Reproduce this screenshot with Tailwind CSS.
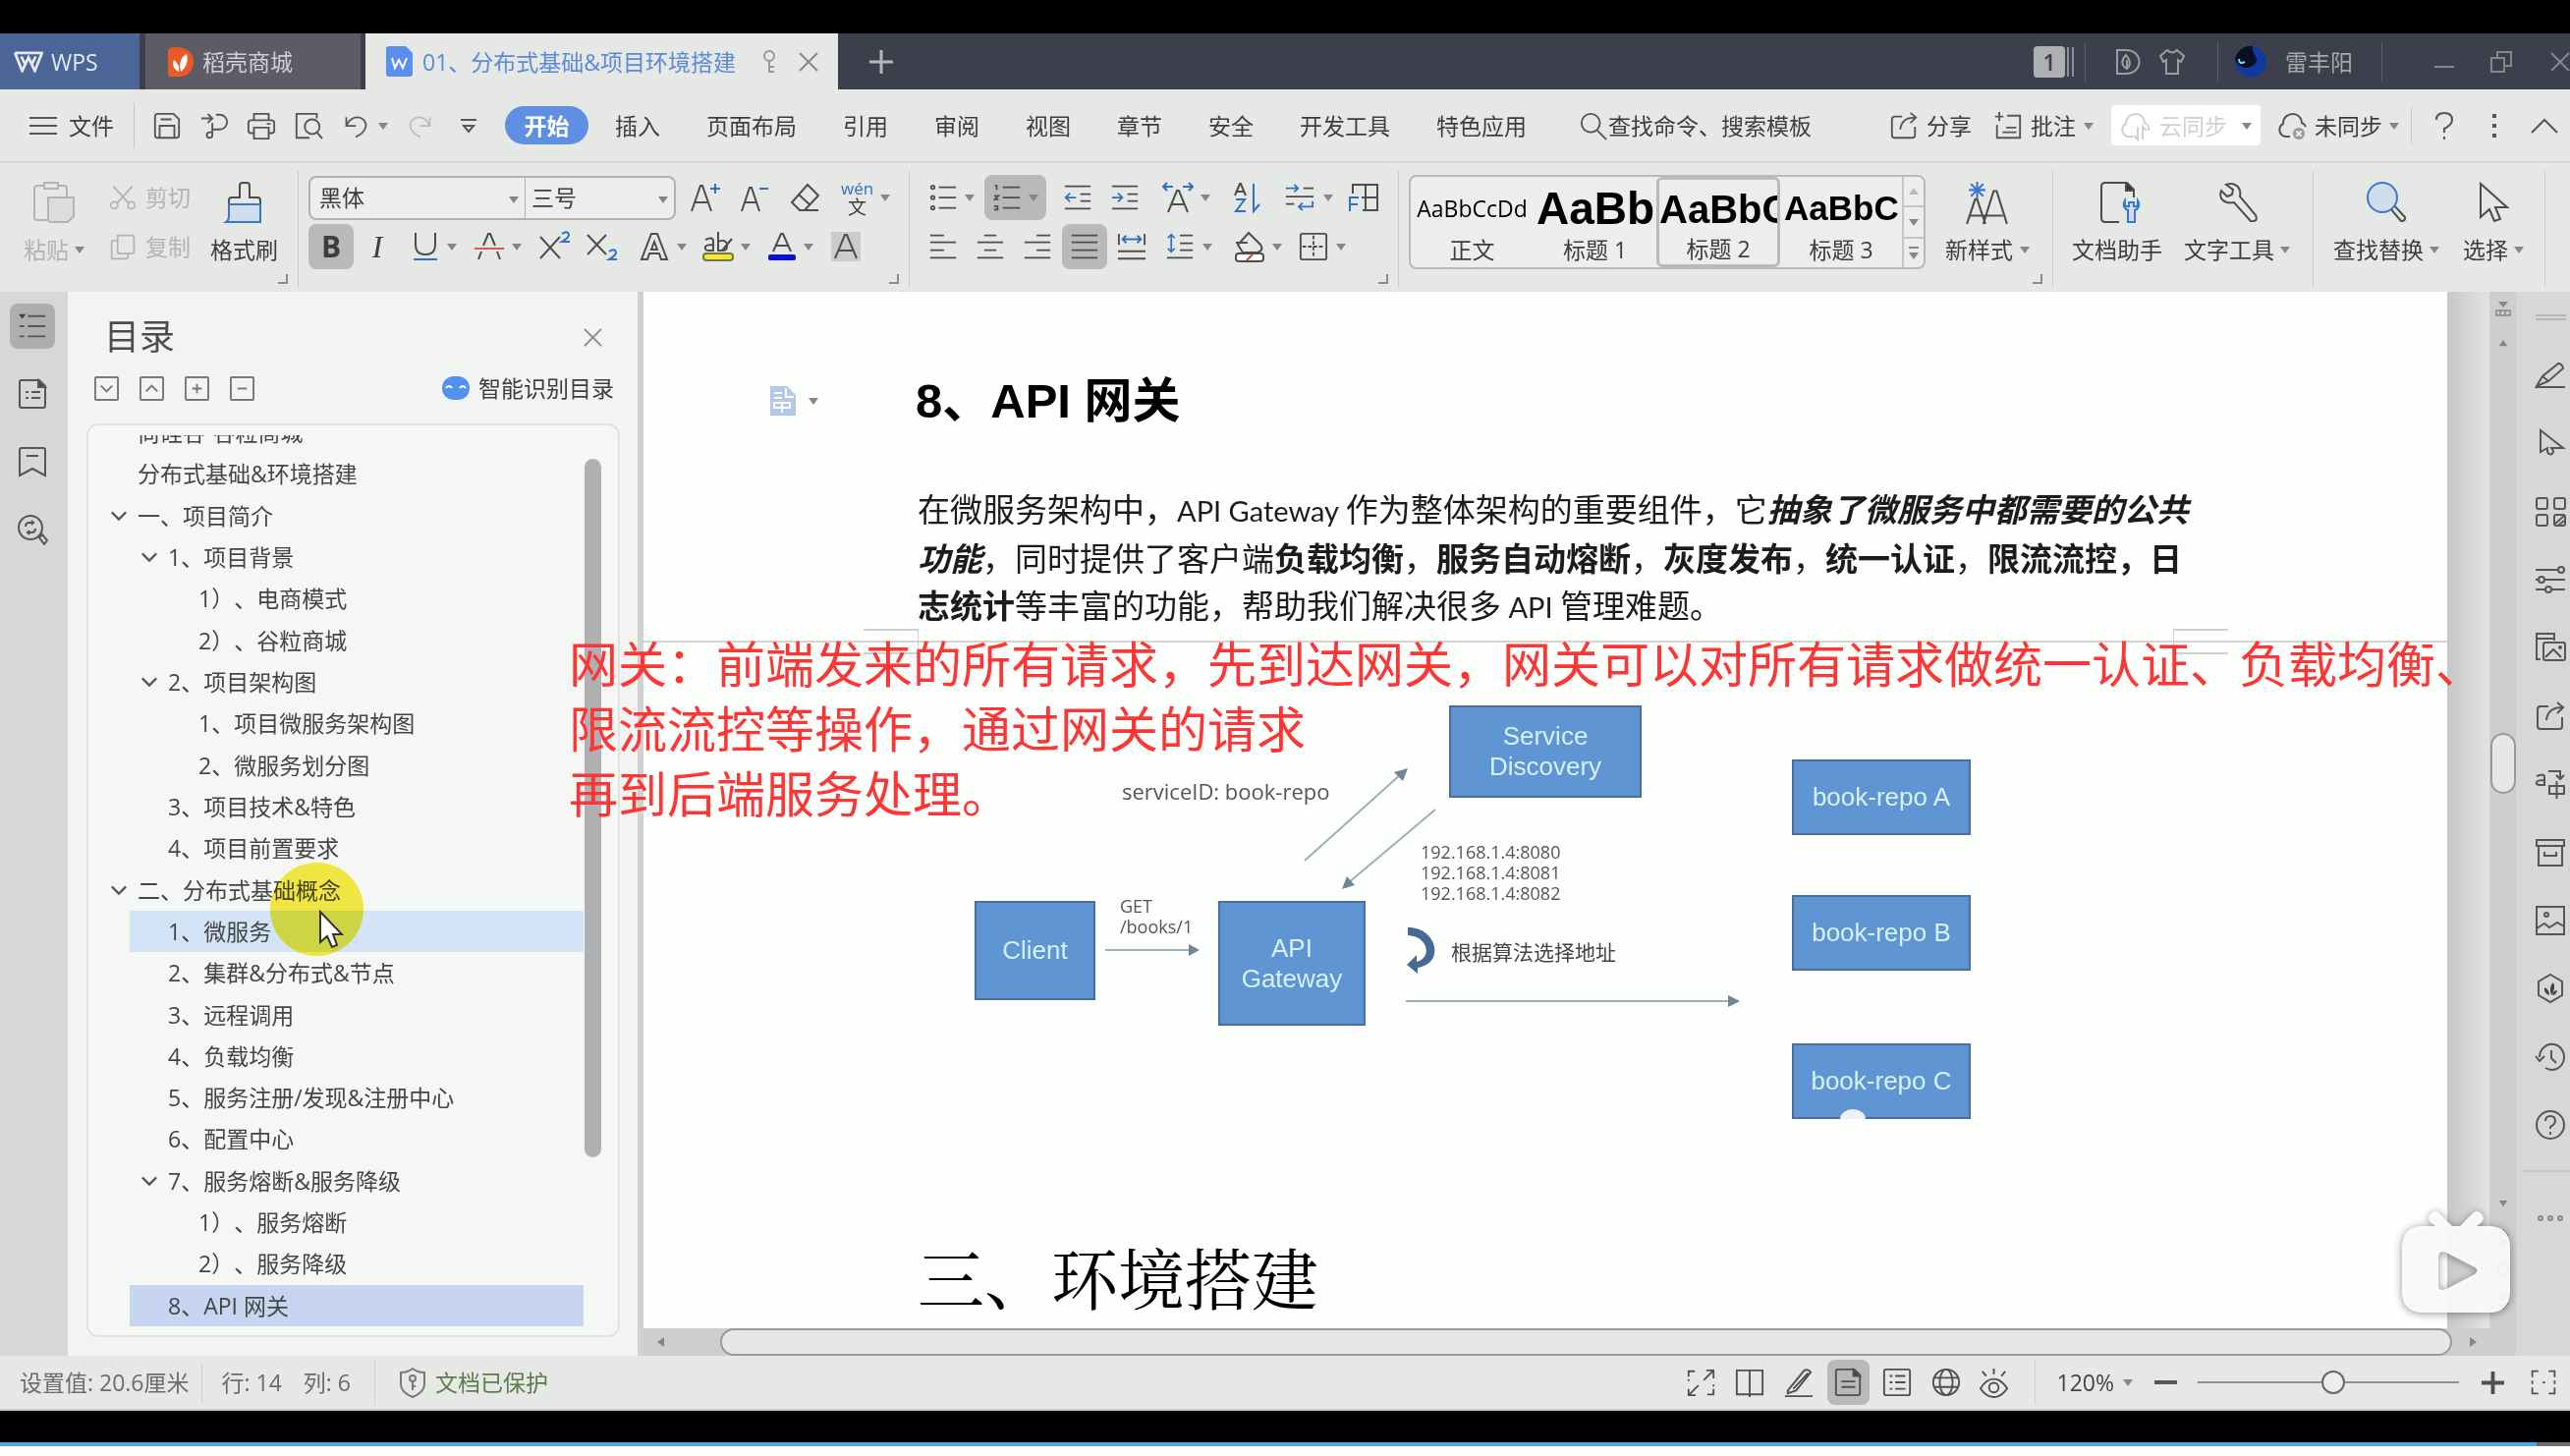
<!DOCTYPE html>
<html lang="zh-CN">
<head>
  <meta charset="UTF-8">
  <meta name="viewport" content="width=device-width, initial-scale=1.0">
  <title>01、分布式基础&amp;项目环境搭建</title>
  <script src="https://cdn.jsdelivr.net/npm/@tailwindcss/browser@4"></script>
</head>
<body class="relative h-screen flex flex-col overflow-hidden bg-black text-[23px] leading-[32px] text-[#3c3e3c] whitespace-nowrap [text-spacing-trim:space-all] font-['Open_Sans','Noto_Sans_CJK_SC',sans-serif]">

  <!-- 图标 -->
  <svg class="hidden">
    <symbol id="caret" viewBox="0 0 10 8"><path d="M0 1h10L5 8z" fill="#858785" stroke="none"/></symbol>
    <symbol id="launch" viewBox="0 0 10 10"><path d="M9 0v9H0" stroke="#8a8c8a"/></symbol>
    <symbol id="save" viewBox="0 0 32 32"><path d="M3 6q0-3 3-3h17l6 6v17q0 3-3 3H6q-3 0-3-3zM8 29V16h16v13M9 9h12"/></symbol>
    <symbol id="pdf" viewBox="0 0 32 32"><path d="M2 8h11M9 3l5 5-5 5M18 4h4a8 8 0 0 1 0 16h-8v6a3 3 0 1 1-3-3h3V13"/></symbol>
    <symbol id="print" viewBox="0 0 32 32"><path d="M8 10V3h16v7M8 24H5q-3 0-3-3v-8q0-3 3-3h22q3 0 3 3v8q0 3-3 3h-3M8 18h16v12H8zM22 14h4"/></symbol>
    <symbol id="preview" viewBox="0 0 32 32"><path d="M25 8V3H3v26h14"/><circle cx="20" cy="17" r="8"/><path d="m25 23 6 7"/></symbol>
    <symbol id="undo" viewBox="0 0 32 32"><path d="M4 6v10h11M4 16C9 5 19 4 24 9s4 14-9 20"/></symbol>
    <symbol id="redo" viewBox="0 0 32 32"><path d="M28 6v10H17M28 16C23 5 13 4 8 9s-4 14 9 20"/></symbol>
    <symbol id="search" viewBox="0 0 32 32"><circle cx="13" cy="13" r="10"/><path d="m20 21 10 10"/></symbol>
    <symbol id="share" viewBox="0 0 32 32"><path d="M14 6H6q-3 0-3 3v17q0 3 3 3h19q3 0 3-3v-9M12 20c1-9 6-13 16-13M23 2l6 5-6 6"/></symbol>
    <symbol id="comment" viewBox="0 0 32 32"><path d="M2 6h9M6.500 1v10M15 5h14v24H4V15M14 18h11M10 23h15"/></symbol>
    <symbol id="cloud" viewBox="0 0 32 32"><path d="M14 27H9a7 7 0 0 1-2-13C7 7 12 4 17 4s9 4 9 9a7 7 0 0 1 4 8M19 17v13l-4-4M24 30V17l4 4"/></symbol>
    <symbol id="cloudx" viewBox="0 0 32 32"><path d="M14 27H9a7 7 0 0 1-2-13C7 7 12 4 17 4s9 4 9 9q3 1 4 4"/><circle cx="23" cy="24" r="6" fill="#999b99" stroke="none"/><path d="m20.500 21.500 5 5m0-5-5 5" stroke="#eee"/></symbol>
    <symbol id="paste" viewBox="0 0 44 44"><path d="M12 5H5q-3 0-3 3v29q0 3 3 3h10M26 5h6q3 0 3 3v8M12 2h14v6H12z"/><path d="M16 17h26v19l-6 6H19q-3 0-3-3z" fill="#dcdedb"/></symbol>
    <symbol id="cut" viewBox="0 0 32 32"><path d="m5 3 18 20M27 3 9 23"/><circle cx="6" cy="25" r="4"/><circle cx="26" cy="25" r="4"/></symbol>
    <symbol id="copy" viewBox="0 0 32 32"><path d="M10 3h17q2 0 2 2v17q0 2-2 2H12q-2 0-2-2zM10 9H5q-2 0-2 2v17q0 2 2 2h15q2 0 2-2v-4"/></symbol>
    <symbol id="brush" viewBox="0 0 44 44"><path d="M6 24v-4q0-3 3-3h8V5q0-3 3-3h4q3 0 3 3v12h8q3 0 3 3v4"/><path d="M6 24h32v18H3q3-2 3-6z" fill="#cfdded" stroke="#3878c4"/></symbol>
    <symbol id="eraser" viewBox="0 0 32 32"><path d="M18 3 29 14 15 29H10L2 21zM9 13l12 11M13 29h16"/></symbol>
    <symbol id="bullets" viewBox="0 0 32 32"><path d="M11 4h20M11 16h20M11 28h20"/><circle cx="4" cy="4" r="2"/><circle cx="4" cy="16" r="2"/><circle cx="4" cy="28" r="2"/></symbol>
    <symbol id="numbers" viewBox="0 0 32 32"><path d="M11 4h20M11 16h20M11 28h20M2 2h2v5M1 14h5l-4 4h4M1 26h4v4H1"/></symbol>
    <symbol id="outdent" viewBox="0 0 32 32"><path d="M1 3h30M19 12h12M19 20h12M1 29h30"/><path d="M14 16H2m5-5-5 5 5 5" stroke="#3070c0"/></symbol>
    <symbol id="indent" viewBox="0 0 32 32"><path d="M1 3h30M19 12h12M19 20h12M1 29h30"/><path d="M1 16h12m-5-5 5 5-5 5" stroke="#3070c0"/></symbol>
    <symbol id="scale" viewBox="0 0 32 32"><path d="m6 31 9-22h2l9 22M9 23h14"/><path d="M1 5h10M5 1 1 5l4 4M21 5h10m-4-4 4 4-4 4" stroke="#3070c0"/></symbol>
    <symbol id="sort" viewBox="0 0 32 32"><path d="m3 14 5-12h1l5 12M5 10h8"/><path d="M4 18h9L4 30h10M22 2v28l6-7" stroke="#3070c0"/></symbol>
    <symbol id="marks" viewBox="0 0 32 32"><path d="M20 6h11M1 15h30M1 23h9"/><path d="M1 6h13m-4-4 4 4-4 4M30 20v6H15m4-4-4 4 4 4" stroke="#3070c0"/></symbol>
    <symbol id="tabs" viewBox="0 0 32 32"><path d="M5 12V3h25v26H15M18 3v26M14 16h16"/><path d="M2 30V16h9M2 23h8" stroke="#3070c0"/></symbol>
    <symbol id="left" viewBox="0 0 32 32"><path d="M1 3h16M1 11h30M1 20h16M1 29h30"/></symbol>
    <symbol id="center" viewBox="0 0 32 32"><path d="M9 3h14M1 11h30M9 20h14M1 29h30"/></symbol>
    <symbol id="right" viewBox="0 0 32 32"><path d="M15 3h16M1 11h30M15 20h16M1 29h30"/></symbol>
    <symbol id="justify" viewBox="0 0 32 32"><path d="M1 3h30M1 11h30M1 20h30M1 29h30"/></symbol>
    <symbol id="spread" viewBox="0 0 32 32"><path d="M2 2v12M30 2v12M1 21h30M1 29h30"/><path d="M6 8h20M10 4 6 8l4 4M22 4l4 4-4 4" stroke="#3070c0"/></symbol>
    <symbol id="spacing" viewBox="0 0 32 32"><path d="M16 3h15M16 12h15M16 20h15M1 29h30"/><path d="M6 2v20M2 6l4-4 4 4M2 18l4 4 4-4" stroke="#3070c0"/></symbol>
    <symbol id="bucket" viewBox="0 0 32 32"><path d="M15 2 27 14c4 6-2 8-4 8H9L4 14zM2 12h12"/><rect x="2" y="23" width="28" height="8" rx="3" fill="#fff"/><path d="m13 30 6-6" stroke="#d0453a"/></symbol>
    <symbol id="border" viewBox="0 0 32 32"><rect x="2" y="2" width="28" height="28" rx="2"/><path d="M16 4v24M4 16h24" stroke-dasharray="4 2"/></symbol>
    <symbol id="style" viewBox="0 0 44 44"><path d="m2 42 8-24h2l8 24M5 34h32M18 42 28 10h3l10 32"/><path d="M12 1v16M4 9h16M6 3l12 12M18 3 6 15" stroke="#3878d0"/></symbol>
    <symbol id="helper" viewBox="0 0 44 44"><path d="M22 42H8q-4 0-4-4V6q0-4 4-4h22l7 7v8"/><path d="M29 2v8h8" fill="#333"/><path d="M28 20c-3 5 0 9 3 10v12h7V30c3-1 6-5 3-10v6h-4v-4h-5v4h-4z" fill="#cfdded" stroke="#3878d0"/></symbol>
    <symbol id="wrench" viewBox="0 0 44 44"><path d="M10 4c8-3 16 2 14 12l16 19q3 7-5 6L18 22C8 24 2 18 5 10l6 6 5-2 1-5z"/></symbol>
    <symbol id="find" viewBox="0 0 44 44"><path d="m26 28 4-3 11 12q1 4-4 4z"/><circle cx="18" cy="17" r="15" fill="#cfdded" stroke="#3878d0"/></symbol>
    <symbol id="pointer" viewBox="0 0 44 44"><path d="M9 3v34l9-8 5 12 6-2-5-12h12z"/></symbol>
    <symbol id="outline" viewBox="0 0 32 32"><path d="M11 5h19M11 16h19M11 27h19M2 16h5M2 27h5"/><path d="M1 3h8l-4 5z" fill="#444" stroke="none"/></symbol>
    <symbol id="page" viewBox="0 0 32 32"><path d="M3 4q0-2 2-2h18l6 6v20q0 2-2 2H5q-2 0-2-2zM9 14h3M15 14h9M9 20h3M15 20h9"/><path d="M22 2v7h7z" fill="#444"/></symbol>
    <symbol id="doc" viewBox="0 0 32 32"><path d="M3 4q0-2 2-2h18l6 6v20q0 2-2 2H5q-2 0-2-2zM9 15h15M9 21h15"/><path d="M22 2v7h7z" fill="#444"/></symbol>
    <symbol id="bookmark" viewBox="0 0 32 32"><path d="M3 30V4q0-2 2-2h22q2 0 2 2v26l-13-7zM10 10h12"/></symbol>
    <symbol id="lookup" viewBox="0 0 32 32"><circle cx="14" cy="14" r="12"/><path d="m23 24 3-3 5 6-3 4zM9 13q0-4 4-4h4M19 15q0 4-4 4h-4M15 7l2 2-2 2M13 17l-2 2 2 2"/></symbol>
    <symbol id="pen" viewBox="0 0 32 32"><path d="M2 27 8 17 24 4q4 0 5 5L14 22zM8 17l6 5M1 28h30"/></symbol>
    <symbol id="arrow" viewBox="0 0 32 32"><path d="M6 3v22l7-4c-1 8 6 8 6 3l-2-3h12z"/></symbol>
    <symbol id="apps" viewBox="0 0 32 32"><rect x="2" y="2" width="11" height="11" rx="2"/><rect x="20" y="2" width="11" height="11" rx="2"/><rect x="2" y="19" width="11" height="11" rx="2"/><rect x="20" y="19" width="11" height="11" rx="2"/><path d="m21 28 9-8M24 30l6-5"/></symbol>
    <symbol id="sliders" viewBox="0 0 32 32"><path d="M1 6h22M1 16h3M11 16h20M1 26h10M18 26h13"/><circle cx="27" cy="6" r="3"/><circle cx="7" cy="16" r="3"/><circle cx="14" cy="26" r="3"/></symbol>
    <symbol id="images" viewBox="0 0 32 32"><path d="M6 28H2V2h18v7M2 7h18"/><rect x="9" y="11" width="22" height="18" rx="2"/><path d="m11 26 8-8 8 8"/><circle cx="26" cy="16" r="1"/></symbol>
    <symbol id="translate" viewBox="0 0 32 32"><path d="M14 3h12v8M22 7l4 4 4-4M15 18h15v8H15zM22.500 13v18M2 8q8-3 8 1v8H5q-4 0-3-3 1-2 8-2"/></symbol>
    <symbol id="archive" viewBox="0 0 32 32"><path d="M2 3h28v6H2zM4 9v20h24V9M10 15v4h12v-4"/></symbol>
    <symbol id="image" viewBox="0 0 32 32"><rect x="2" y="2" width="28" height="28"/><path d="m2 24 8-5 5 4 8-5 7 4"/><circle cx="12" cy="10" r="2"/></symbol>
    <symbol id="hex" viewBox="0 0 32 32"><path d="m16 2 12 7v14l-12 7-12-7V9z"/><path d="M15 23q-6-2-5-8 5 2 5 8zM17 23q-3-9 2-13 3 6-2 13zM18 23q1-5 5-5-1 5-5 5z" fill="#444" stroke="none"/></symbol>
    <symbol id="history" viewBox="0 0 32 32"><path d="M5 16A12.500 13 0 1 1 11 27M1 15l4 5 5-5M17 9v8l5 5"/></symbol>
    <symbol id="help" viewBox="0 0 32 32"><circle cx="16" cy="16" r="14"/><path d="M11 12q0-5 5-5t5 5q0 3-5 6v2M16 23v3"/></symbol>
    <symbol id="full" viewBox="0 0 32 32"><path d="M2 9V3h7M23 29h7v-6M2 23v7h8M2 30l11-11M30 11V2h-8M30 2 19 13M2 14v-2M30 18v2"/></symbol>
    <symbol id="book" viewBox="0 0 32 32"><path d="M2 3h14v26H2zM16 3h14v26H16zM16 29v3"/></symbol>
    <symbol id="edit" viewBox="0 0 32 32"><path d="M4 25 22 3q4-2 7 2L13 25l-9 3zM10 23 26 6M1 31h30"/></symbol>
    <symbol id="list" viewBox="0 0 32 32"><rect x="2" y="2" width="28" height="28" rx="2"/><path d="M8 9h3M14 9h11M8 16h3M14 16h11M14 23h11M8 23h3"/></symbol>
    <symbol id="globe" viewBox="0 0 32 32"><circle cx="16" cy="16" r="14"/><ellipse cx="16" cy="16" rx="7" ry="14"/><path d="M3 11h26M3 21h26"/></symbol>
    <symbol id="eye" viewBox="0 0 32 32"><path d="M2 22Q8 12 16 12t14 10q-6 9-14 9T2 22zM16 1v6M4 4l4 5M28 4l-4 5"/><circle cx="16" cy="21" r="5"/></symbol>
    <symbol id="fit" viewBox="0 0 32 32"><path d="M3 10V3h7M22 3h7v7M3 22v7h7M22 29h7v-7M3 14v4M29 14v4M15 16h3"/></symbol>
    <symbol id="x" viewBox="0 0 20 20"><path d="m1 1 18 18M19 1 1 19"/></symbol>
    <symbol id="down" viewBox="0 0 20 12"><path d="m2 2 8 8 8-8"/></symbol>
  </svg>

  <div class="h-[34px] shrink-0"></div>

  <!-- 标签栏 -->
  <header class="h-[57px] shrink-0 flex items-center bg-[#3d404c] text-[#d0d1d6]">
    <button class="w-[142px] h-full bg-[#4a6596] flex items-center pl-[14px] gap-[8px] text-[#e3eaf5]">
      <svg class="w-[30px] h-[22px] fill-none stroke-current stroke-[3]" viewBox="0 0 32 24"><path d="M1 2h30l-8 20-7-15-7 15L1 2M8 6l4 8M20 14l4-8"/></svg>WPS
    </button>
    <button class="ml-[6px] w-[219px] h-full bg-[#5b5c66] flex items-center pl-[23px] gap-[9px]">
      <svg class="w-[26px] h-[30px]" viewBox="0 0 26 30"><path d="M0 5q0-5 7-5c12 0 19 6 19 15S19 30 12 30H3q-3 0-3-3z" fill="#ea5a28"/><path d="M11 25c-6-3-7-8-5-12 4 3 6 7 5 12zM13 25c-2-9 0-15 6-18 2 8-1 14-6 18z" fill="#fff"/></svg>稻壳商城
    </button>
    <div class="ml-[5px] w-[481px] h-full bg-[#e6e8e5] flex items-center pl-[21px] text-[#5a8ad8]">
      <svg class="w-[27px] h-[31px] mr-[10px]" viewBox="0 0 27 31"><path d="M0 3q0-3 3-3h17l7 7v21q0 3-3 3H3q-3 0-3-3z" fill="#5b8fec"/><path d="m6 12 3 10 4-8 4 8 4-10" fill="none" stroke="#fff" stroke-width="2"/></svg>
      <span>01、分布式基础&amp;项目环境搭建</span>
      <svg class="ml-[26px] w-[16px] h-[24px] fill-none stroke-[#999] stroke-2" viewBox="0 0 16 24"><circle cx="8" cy="6" r="5"/><path d="M8 11v12M8 17h5M8 22h5"/></svg>
      <button aria-label="关闭标签" class="ml-[22px]"><svg class="size-[20px] stroke-[#888] stroke-2"><use href="#x"/></svg></button>
    </div>
    <button aria-label="新建" class="ml-[32px]"><svg class="size-[24px] stroke-[#b5b6bb] stroke-[3]" viewBox="0 0 24 24"><path d="M12 0v24M0 12h24"/></svg></button>
    <div class="ml-auto flex items-center h-full stroke-[#9a9ca3] fill-none">
      <span class="w-[32px] h-[32px] rounded bg-[#aeafb3] text-[#3d404c] font-semibold text-center">1</span>
      <span class="ml-[2px] w-[7px] h-[30px] border-x-2 border-[#8d8f96]"></span>
      <span class="ml-[11px] w-px h-[40px] bg-[#5b5d68]"></span>
      <svg class="ml-[30px] w-[26px] h-[28px] stroke-2" viewBox="0 0 26 28"><path d="M2 2h9c18 0 18 24 0 24H2zM12 21c-6-3-6-9-1-14 2 3 7 8 1 14zm0 0V12"/></svg>
      <svg class="ml-[19px] w-[26px] h-[28px] stroke-2" viewBox="0 0 26 28"><path d="M8 2 1 8l3 6 3-2v14h12V12l3 2 3-6-7-6q-5 5-10 0z"/></svg>
      <span class="ml-[33px] w-px h-[40px] bg-[#5b5d68]"></span>
      <svg class="ml-[17px] size-[32px]" viewBox="0 0 32 32"><circle cx="16" cy="16" r="16" fill="#123a9c" stroke="none"/><path d="M0 14A16 16 0 0 1 18 0c-2 8 8 12 2 18S6 24 0 14z" fill="#061020" stroke="none"/><path d="M4 13q0 6 6 3" stroke="#7fe0e8" stroke-width="2"/></svg>
      <span class="ml-[19px] text-[#a5a7ae]">雷丰阳</span>
      <span class="ml-[29px] w-px h-[40px] bg-[#5b5d68]"></span>
      <button aria-label="最小化" class="ml-[53px] mt-[10px] w-[20px] h-[2px] bg-[#85878e]"></button>
      <button aria-label="还原" class="ml-[37px]"><svg class="size-[22px] stroke-[#85878e] stroke-2" viewBox="0 0 22 22"><path d="M1 7h13v14H1zM7 7V1h14v14h-7"/></svg></button>
      <button aria-label="关闭" class="ml-[39px]"><svg class="size-[20px] stroke-[#85878e] stroke-2"><use href="#x"/></svg></button>
    </div>
  </header>

  <!-- 菜单栏 -->
  <nav class="h-[75px] shrink-0 flex items-center bg-[#e6e8e5] border-b-2 border-[#d6d8d5] fill-none stroke-[#555755] stroke-2">
    <button class="ml-[30px] flex items-center gap-[12px]">
      <svg class="w-[28px] h-[20px]" viewBox="0 0 28 20"><path d="M0 2h28M0 10h28M0 18h28"/></svg>文件
    </button>
    <span class="ml-[20px] w-px h-[46px] bg-[#c4c6c3]"></span>
    <button aria-label="保存" class="ml-[18px]"><svg class="size-[30px]"><use href="#save"/></svg></button>
    <button aria-label="输出为PDF" class="ml-[18px]"><svg class="size-[30px]"><use href="#pdf"/></svg></button>
    <button aria-label="打印" class="ml-[18px]"><svg class="size-[30px]"><use href="#print"/></svg></button>
    <button aria-label="打印预览" class="ml-[18px]"><svg class="size-[30px]"><use href="#preview"/></svg></button>
    <button aria-label="撤销" class="ml-[20px] flex items-center gap-[8px]"><svg class="size-[28px]"><use href="#undo"/></svg><svg class="w-[10px] h-[8px]"><use href="#caret"/></svg></button>
    <button aria-label="恢复" class="ml-[18px] stroke-[#bbbdba]"><svg class="size-[28px]"><use href="#redo"/></svg></button>
    <button aria-label="更多" class="ml-[28px]"><svg class="w-[16px] h-[16px]" viewBox="0 0 16 16"><path d="M0 2h16M3 8h10l-5 6z"/></svg></button>
    <button class="ml-[29px] w-[85px] h-[39px] rounded-full bg-[#5e8fe2] text-white font-bold">开始</button>
    <button class="ml-[27px]">插入</button>
    <button class="ml-[47px]">页面布局</button>
    <button class="ml-[47px]">引用</button>
    <button class="ml-[47px]">审阅</button>
    <button class="ml-[47px]">视图</button>
    <button class="ml-[47px]">章节</button>
    <button class="ml-[47px]">安全</button>
    <button class="ml-[47px]">开发工具</button>
    <button class="ml-[47px]">特色应用</button>
    <label class="ml-[53px] flex items-center">
      <svg class="size-[30px]"><use href="#search"/></svg>
      <input type="text" aria-label="搜索" placeholder="查找命令、搜索模板" class="w-[230px] bg-transparent placeholder:text-[#3c3e3c] placeholder:opacity-100 outline-none">
    </label>
    <div class="ml-auto flex items-center">
      <button class="flex items-center gap-[8px]"><svg class="size-[30px]"><use href="#share"/></svg>分享</button>
      <button class="ml-[22px] flex items-center gap-[8px]"><svg class="size-[30px]"><use href="#comment"/></svg>批注<svg class="w-[10px] h-[8px]"><use href="#caret"/></svg></button>
      <button class="ml-[18px] w-[152px] h-[41px] rounded bg-white text-[#cfd1ce] stroke-[#cfd1ce] flex items-center pl-[8px] gap-[9px]"><svg class="size-[32px]"><use href="#cloud"/></svg>云同步<svg class="ml-[6px] w-[10px] h-[8px]"><use href="#caret"/></svg></button>
      <button class="ml-[16px] flex items-center gap-[7px]"><svg class="size-[32px]"><use href="#cloudx"/></svg>未同步<svg class="w-[10px] h-[8px]"><use href="#caret"/></svg></button>
      <span class="ml-[12px] w-px h-[38px] bg-[#c4c6c3]"></span>
      <button aria-label="帮助" class="ml-[23px]"><svg class="w-[20px] h-[28px]" viewBox="0 0 20 28"><path d="M2 8q0-7 8-7t8 7q0 5-8 9v4M10 25v3"/></svg></button>
      <button aria-label="菜单" class="ml-[39px]"><svg class="w-[4px] h-[24px] stroke-[4]" viewBox="0 0 4 24"><path d="M2 0v4M2 10v4M2 20v4"/></svg></button>
      <button aria-label="收起功能区" class="ml-[35px] mr-[12px]"><svg class="w-[28px] h-[16px]" viewBox="0 0 28 16"><path d="M1 15 14 2l13 13"/></svg></button>
    </div>
  </nav>

  <!-- 功能区 -->
  <div class="h-[131px] shrink-0 flex pt-[8px] bg-[#e6e8e5] fill-none stroke-[#4c4e4c] stroke-2">

    <section class="relative h-[119px] w-[304px] shrink-0 border-r border-[#cccecb] pt-[4px] flex">
      <button class="w-[82px] ml-[22px] flex flex-col items-start text-[#b2b4b1] stroke-[#b2b4b1] pt-[6px]">
        <svg class="ml-[11px] size-[44px]"><use href="#paste"/></svg>
        <span class="mt-[10px] flex items-center gap-[6px] pl-[2px]">粘贴<svg class="w-[10px] h-[8px]"><use href="#caret"/></svg></span>
      </button>
      <div class="ml-[7px] w-[90px] flex flex-col gap-[4px] text-[#b2b4b1] stroke-[#b2b4b1]">
        <button class="h-[46px] flex items-center gap-[9px]"><svg class="size-[28px]"><use href="#cut"/></svg>剪切</button>
        <button class="h-[46px] flex items-center gap-[9px]"><svg class="size-[28px]"><use href="#copy"/></svg>复制</button>
      </div>
      <button class="ml-[13px] flex flex-col items-center pt-[6px]">
        <svg class="size-[44px]"><use href="#brush"/></svg><span class="mt-[10px]">格式刷</span>
      </button>
      <svg class="absolute right-[10px] bottom-[4px] size-[10px]"><use href="#launch"/></svg>
    </section>

    <section class="relative h-[119px] w-[622px] shrink-0 border-r border-[#cccecb] pt-[4px] pl-[10px] flex flex-col gap-[4px]">
      <div class="h-[46px] flex items-center">
        <div class="w-[374px] h-[45px] flex rounded-lg border-2 border-[#b0b2af] bg-[#eceeeb]">
          <div class="relative flex-1 border-r border-[#b0b2af]">
            <select aria-label="字体" class="appearance-none size-full pl-[9px]"><option>黑体</option></select>
            <svg class="absolute right-[6px] top-[18px] w-[10px] h-[8px] pointer-events-none"><use href="#caret"/></svg>
          </div>
          <div class="relative w-[151px]">
            <select aria-label="字号" class="appearance-none size-full pl-[6px]"><option>三号</option></select>
            <svg class="absolute right-[6px] top-[18px] w-[10px] h-[8px] pointer-events-none"><use href="#caret"/></svg>
          </div>
        </div>
        <button aria-label="增大字号" class="ml-[14px]"><svg class="size-[32px]" viewBox="0 0 32 32"><path d="m2 30 9-26h2l9 26M5 21h14"/><path d="M26 2v10M21 7h10" stroke="#3070c0"/></svg></button>
        <button aria-label="减小字号" class="ml-[18px]"><svg class="size-[32px]" viewBox="0 0 32 32"><path d="m3 30 8-24h2l8 24M6 21h12"/><path d="M21 7h9" stroke="#3070c0"/></svg></button>
        <button aria-label="清除格式" class="ml-[20px]"><svg class="size-[32px]"><use href="#eraser"/></svg></button>
        <button class="ml-[20px] flex items-center gap-[7px]"><span class="flex flex-col items-center"><span class="text-[17px] leading-[19px] text-[#3070c0]">wén</span><span class="text-[19px] leading-[20px]">文</span></span><svg class="w-[10px] h-[8px]"><use href="#caret"/></svg></button>
      </div>
      <div class="h-[46px] flex items-center">
        <button class="w-[46px] h-full rounded-lg bg-[#b8bab7] text-[30px] font-bold">B</button>
        <button class="ml-[10px] w-[28px] text-[32px] italic font-['Liberation_Serif',serif]">I</button>
        <button aria-label="下划线" class="ml-[21px] flex items-center gap-[8px]"><svg class="size-[28px]" viewBox="0 0 28 28"><path d="M4 0v12q0 10 10 10t10-10V0"/><path d="M2 27h24" stroke="#3070c0"/></svg><svg class="w-[10px] h-[8px]"><use href="#caret"/></svg></button>
        <button aria-label="删除线" class="ml-[18px] flex items-center gap-[8px]"><svg class="size-[30px]" viewBox="0 0 30 30"><path d="m9 14 5-12h2l5 12M7 20 4 28M23 20l3 8"/><path d="M0 17h30" stroke="#d0604f"/></svg><svg class="w-[10px] h-[8px]"><use href="#caret"/></svg></button>
        <button aria-label="上标" class="ml-[18px]"><svg class="size-[32px]" viewBox="0 0 32 32"><path d="m1 6 20 22M21 6 1 28"/><path d="M23 3q6-4 7 1 0 3-7 7h8" stroke="#3070c0"/></svg></button>
        <button aria-label="下标" class="ml-[16px]"><svg class="size-[32px]" viewBox="0 0 32 32"><path d="m1 4 19 20M20 4 1 24"/><path d="M23 21q6-4 7 1 0 3-7 7h8" stroke="#3070c0"/></svg></button>
        <button aria-label="文字效果" class="ml-[22px] flex items-center gap-[8px]"><svg class="size-[30px]" viewBox="0 0 30 30"><path d="M12 2h6l10 26h-6l-2-6H10l-2 6H2zM15 10l-3 8h6z"/></svg><svg class="w-[10px] h-[8px]"><use href="#caret"/></svg></button>
        <button aria-label="突出显示" class="ml-[16px] flex items-center gap-[7px]"><svg class="size-[32px]" viewBox="0 0 32 32"><path d="M3 9q8-4 8 2v9H6q-4 0-3-4 1-2 8-2M16 1v19h5q5 0 4-7-2-5-9-2M30 8 20 20"/><rect x="1" y="23" width="30" height="7" rx="3" fill="#f3e53c" stroke="#77783c"/></svg><svg class="w-[10px] h-[8px]"><use href="#caret"/></svg></button>
        <button aria-label="字体颜色" class="ml-[18px] flex items-center gap-[8px]"><svg class="size-[28px]" viewBox="0 0 28 28"><path d="m5 19 8-18h2l8 18M8 13h12"/><rect x="0" y="22" width="28" height="6" rx="2" fill="#0a12d8" stroke="none"/></svg><svg class="w-[10px] h-[8px]"><use href="#caret"/></svg></button>
        <button aria-label="字符底纹" class="ml-[18px] bg-[#cbcdca]"><svg class="size-[30px]" viewBox="0 0 30 30"><path d="m4 27 10-24h2l10 24M8 19h14"/></svg></button>
      </div>
      <svg class="absolute right-[10px] bottom-[4px] size-[10px]"><use href="#launch"/></svg>
    </section>

    <section class="relative h-[119px] w-[498px] shrink-0 border-r border-[#cccecb] pt-[4px] pl-[20px] flex flex-col gap-[4px]">
      <div class="h-[46px] flex items-center">
        <button aria-label="项目符号" class="flex items-center gap-[8px]"><svg class="size-[28px]"><use href="#bullets"/></svg><svg class="w-[10px] h-[8px]"><use href="#caret"/></svg></button>
        <button aria-label="编号" class="ml-[10px] w-[63px] h-full rounded-lg bg-[#b8bab7] flex items-center justify-center gap-[8px]"><svg class="size-[28px]"><use href="#numbers"/></svg><svg class="w-[10px] h-[8px]"><use href="#caret"/></svg></button>
        <button aria-label="减少缩进" class="ml-[18px]"><svg class="size-[28px]"><use href="#outdent"/></svg></button>
        <button aria-label="增加缩进" class="ml-[20px]"><svg class="size-[28px]"><use href="#indent"/></svg></button>
        <button aria-label="字符缩放" class="ml-[24px] flex items-center gap-[7px]"><svg class="size-[32px]"><use href="#scale"/></svg><svg class="w-[10px] h-[8px]"><use href="#caret"/></svg></button>
        <button aria-label="排序" class="ml-[22px]"><svg class="size-[32px]"><use href="#sort"/></svg></button>
        <button aria-label="显示标记" class="ml-[22px] flex items-center gap-[9px]"><svg class="size-[30px]"><use href="#marks"/></svg><svg class="w-[10px] h-[8px]"><use href="#caret"/></svg></button>
        <button aria-label="制表位" class="ml-[15px]"><svg class="size-[32px]"><use href="#tabs"/></svg></button>
      </div>
      <div class="h-[46px] flex items-center">
        <button aria-label="左对齐"><svg class="size-[28px]"><use href="#left"/></svg></button>
        <button aria-label="居中" class="ml-[20px]"><svg class="size-[28px]"><use href="#center"/></svg></button>
        <button aria-label="右对齐" class="ml-[20px]"><svg class="size-[28px]"><use href="#right"/></svg></button>
        <button aria-label="两端对齐" class="ml-[11px] w-[46px] h-full rounded-lg bg-[#b8bab7] flex items-center justify-center"><svg class="size-[28px]"><use href="#justify"/></svg></button>
        <button aria-label="分散对齐" class="ml-[10px]"><svg class="size-[30px]"><use href="#spread"/></svg></button>
        <button aria-label="行距" class="ml-[20px] flex items-center gap-[9px]"><svg class="size-[28px]"><use href="#spacing"/></svg><svg class="w-[10px] h-[8px]"><use href="#caret"/></svg></button>
        <button aria-label="底纹" class="ml-[22px] flex items-center gap-[7px]"><svg class="size-[32px]"><use href="#bucket"/></svg><svg class="w-[10px] h-[8px]"><use href="#caret"/></svg></button>
        <button aria-label="边框" class="ml-[17px] flex items-center gap-[8px]"><svg class="size-[30px]"><use href="#border"/></svg><svg class="w-[10px] h-[8px]"><use href="#caret"/></svg></button>
      </div>
      <svg class="absolute right-[10px] bottom-[4px] size-[10px]"><use href="#launch"/></svg>
    </section>

    <section class="relative h-[119px] w-[666px] shrink-0 border-r border-[#cccecb] pt-[4px] pl-[10px] flex">
      <div class="w-[526px] h-[96px] flex rounded-lg border-2 border-[#b8bab7] bg-[#eceeeb] overflow-hidden">
        <button class="w-[125px] flex flex-col items-center overflow-hidden"><span class="h-[58px] leading-[64px] text-[23px] text-black">AaBbCcDd</span>正文</button>
        <button class="w-[125px] px-[3px] flex flex-col items-center overflow-hidden"><span class="h-[58px] w-full leading-[64px] text-left text-[46px] font-bold text-black overflow-hidden font-['Liberation_Sans',sans-serif]">AaBb</span>标题 1</button>
        <button class="w-[126px] flex flex-col items-center overflow-hidden rounded-md border-[3px] border-[#b8bab7]"><span class="h-[55px] w-full leading-[60px] text-left text-[40px] font-bold text-black overflow-hidden font-['Liberation_Sans',sans-serif]">AaBbCc</span>标题 2</button>
        <button class="w-[124px] px-[4px] flex flex-col items-center overflow-hidden"><span class="h-[58px] w-full leading-[64px] text-left text-[35px] font-bold text-black overflow-hidden font-['Liberation_Sans',sans-serif]">AaBbCc</span>标题 3</button>
        <div class="flex-1 border-l-2 border-[#c4c6c3] flex flex-col divide-y-2 divide-[#c4c6c3]">
          <button aria-label="上一行" class="flex-1 flex items-center justify-center"><svg class="w-[10px] h-[8px] rotate-180 opacity-50"><use href="#caret"/></svg></button>
          <button aria-label="下一行" class="flex-1 flex items-center justify-center"><svg class="w-[10px] h-[8px]"><use href="#caret"/></svg></button>
          <button aria-label="更多样式" class="flex-1 flex flex-col gap-[3px] items-center justify-center"><span class="w-[10px] h-[2px] bg-[#858785]"></span><svg class="w-[10px] h-[8px]"><use href="#caret"/></svg></button>
        </div>
      </div>
      <button class="ml-[20px] flex flex-col items-start pt-[6px]">
        <svg class="ml-[20px] size-[46px]"><use href="#style"/></svg>
        <span class="mt-[8px] flex items-center gap-[7px]">新样式<svg class="w-[10px] h-[8px]"><use href="#caret"/></svg></span>
      </button>
      <svg class="absolute right-[10px] bottom-[4px] size-[10px]"><use href="#launch"/></svg>
    </section>

    <section class="h-[119px] w-[265px] shrink-0 border-r border-[#cccecb] pt-[4px] pl-[19px] flex">
      <button class="flex flex-col items-center pt-[6px]"><svg class="ml-[4px] size-[44px]"><use href="#helper"/></svg><span class="mt-[10px]">文档助手</span></button>
      <button class="ml-[22px] flex flex-col items-start pt-[6px]">
        <svg class="ml-[33px] size-[44px]"><use href="#wrench"/></svg>
        <span class="mt-[10px] flex items-center gap-[6px]">文字工具<svg class="w-[10px] h-[8px]"><use href="#caret"/></svg></span>
      </button>
    </section>

    <section class="h-[119px] w-[236px] shrink-0 border-r border-[#cccecb] pt-[4px] pl-[20px] flex">
      <button class="flex flex-col items-start pt-[6px]">
        <svg class="ml-[32px] size-[44px]"><use href="#find"/></svg>
        <span class="mt-[10px] flex items-center gap-[6px]">查找替换<svg class="w-[10px] h-[8px]"><use href="#caret"/></svg></span>
      </button>
      <button class="ml-[24px] flex flex-col items-start pt-[6px]">
        <svg class="ml-[9px] size-[44px]"><use href="#pointer"/></svg>
        <span class="mt-[10px] flex items-center gap-[6px]">选择<svg class="w-[10px] h-[8px]"><use href="#caret"/></svg></span>
      </button>
    </section>
  </div>

  <main class="relative flex-1 min-h-0 flex bg-[#d6d8d5]">

    <!-- 左侧工具 -->
    <aside class="w-[69px] shrink-0 pt-[12px] pr-[3px] flex flex-col items-center gap-[23px] fill-none stroke-[#555755] stroke-2">
      <button aria-label="目录" class="size-[46px] rounded-lg bg-[#adafac] flex items-center justify-center"><svg class="size-[30px]"><use href="#outline"/></svg></button>
      <button aria-label="章节导航" class="size-[46px] flex items-center justify-center"><svg class="size-[32px]"><use href="#page"/></svg></button>
      <button aria-label="书签" class="size-[46px] flex items-center justify-center"><svg class="size-[32px]"><use href="#bookmark"/></svg></button>
      <button aria-label="查找" class="size-[46px] flex items-center justify-center"><svg class="size-[32px]"><use href="#lookup"/></svg></button>
    </aside>

    <!-- 目录 -->
    <section class="w-[580px] shrink-0 flex flex-col bg-[#f1f4f0] pl-[19px] pr-[18px] pb-[19px]">
      <div class="mt-[22px] h-[48px] flex items-center justify-between pl-[18px] pr-[18px]">
        <h2 class="text-[36px] leading-[48px] text-[#4a4c50]">目录</h2>
        <button aria-label="关闭目录" class="fill-none stroke-[#8a8c8a] stroke-2"><svg class="size-[19px]" viewBox="0 0 20 20"><use href="#x"/></svg></button>
      </div>
      <div class="mt-[15px] h-[26px] flex items-center gap-[21px] pl-[8px] pr-[6px] fill-none stroke-[#777977] stroke-2">
        <button aria-label="展开"><svg class="size-[25px]" viewBox="0 0 26 26"><rect x="1" y="1" width="24" height="24" rx="1"/><path d="m7 10 6 6 6-6"/></svg></button>
        <button aria-label="折叠"><svg class="size-[25px]" viewBox="0 0 26 26"><rect x="1" y="1" width="24" height="24" rx="1"/><path d="m7 16 6-6 6 6"/></svg></button>
        <button aria-label="提升"><svg class="size-[25px]" viewBox="0 0 26 26"><rect x="1" y="1" width="24" height="24" rx="1"/><path d="M8 13h10M13 8v10"/></svg></button>
        <button aria-label="降低"><svg class="size-[25px]" viewBox="0 0 26 26"><rect x="1" y="1" width="24" height="24" rx="1"/><path d="M8 13h10"/></svg></button>
        <button class="ml-auto flex items-center gap-[9px]"><svg class="w-[28px] h-[24px]" viewBox="0 0 28 24"><rect width="28" height="24" rx="12" fill="#4f93ee" stroke="none"/><path d="M4 12q3-4 6 0M18 12q3-4 6 0" stroke="#fff"/></svg>智能识别目录</button>
      </div>
      <div class="mt-[23px] flex-1 min-h-0 rounded-xl border-2 border-[#e0e3df] bg-[#f4f7f3] pt-[10px] pb-[9px] pl-[12px] pr-[17px] flex justify-between">
        <div class="w-[492px] pl-[30px] overflow-hidden flex flex-col text-[#444644] fill-none stroke-[#555755] stroke-[2.500]">
          <ul class="-mt-[24px] flex-1 flex flex-col">
            <li class="flex-1 flex items-center pl-[8px]"><a href="#">尚硅谷-谷粒商城</a></li>
            <li class="flex-1 flex items-center pl-[8px]"><a href="#">分布式基础&amp;环境搭建</a></li>
            <li class="flex-1 flex items-center relative pl-[8px]"><svg class="absolute -left-[20px] w-[18px] h-[12px]"><use href="#down"/></svg><a href="#">一、项目简介</a></li>
            <li class="flex-1 flex items-center relative pl-[39px]"><svg class="absolute left-[11px] w-[18px] h-[12px]"><use href="#down"/></svg><a href="#">1、项目背景</a></li>
            <li class="flex-1 flex items-center pl-[70px]"><a href="#">1）、电商模式</a></li>
            <li class="flex-1 flex items-center pl-[70px]"><a href="#">2）、谷粒商城</a></li>
            <li class="flex-1 flex items-center relative pl-[39px]"><svg class="absolute left-[11px] w-[18px] h-[12px]"><use href="#down"/></svg><a href="#">2、项目架构图</a></li>
            <li class="flex-1 flex items-center pl-[70px]"><a href="#">1、项目微服务架构图</a></li>
            <li class="flex-1 flex items-center pl-[70px]"><a href="#">2、微服务划分图</a></li>
            <li class="flex-1 flex items-center pl-[39px]"><a href="#">3、项目技术&amp;特色</a></li>
            <li class="flex-1 flex items-center pl-[39px]"><a href="#">4、项目前置要求</a></li>
            <li class="flex-1 flex items-center relative pl-[8px]"><svg class="absolute -left-[20px] w-[18px] h-[12px]"><use href="#down"/></svg><a href="#">二、分布式基础概念</a></li>
            <li class="flex-1 flex items-center pl-[39px] bg-[#d2e4f6]"><a href="#">1、微服务</a></li>
            <li class="flex-1 flex items-center pl-[39px]"><a href="#">2、集群&amp;分布式&amp;节点</a></li>
            <li class="flex-1 flex items-center pl-[39px]"><a href="#">3、远程调用</a></li>
            <li class="flex-1 flex items-center pl-[39px]"><a href="#">4、负载均衡</a></li>
            <li class="flex-1 flex items-center pl-[39px]"><a href="#">5、服务注册/发现&amp;注册中心</a></li>
            <li class="flex-1 flex items-center pl-[39px]"><a href="#">6、配置中心</a></li>
            <li class="flex-1 flex items-center relative pl-[39px]"><svg class="absolute left-[11px] w-[18px] h-[12px]"><use href="#down"/></svg><a href="#">7、服务熔断&amp;服务降级</a></li>
            <li class="flex-1 flex items-center pl-[70px]"><a href="#">1）、服务熔断</a></li>
            <li class="flex-1 flex items-center pl-[70px]"><a href="#">2）、服务降级</a></li>
            <li class="flex-1 flex items-center pl-[39px] bg-[#c8d5f0]"><a href="#">8、API 网关</a></li>
          </ul>
        </div>
        <div class="mt-[24px] w-[17px] h-[711px] rounded-full bg-[#aeb0b1]"></div>
      </div>
    </section>
    <div class="w-[6px] shrink-0 bg-[#d0d2cf]"></div>

    <!-- 文档 -->
    <div class="flex-1 min-w-0 flex flex-col">
      <div class="flex-1 min-h-0 flex">
        <div class="flex-1 min-w-0 overflow-hidden bg-[#fdfffc] text-[#1c1c1c]">
          <section class="relative h-[357px] border-b-2 border-[#d3d5d2] pt-[71px]">
            <div class="h-[80px] flex items-center pl-[129px]">
              <svg class="w-[26px] h-[30px]" viewBox="0 0 26 30"><path d="M0 0h17l9 9v21H0z" fill="#b4c8ea"/><path d="M16 2v9h8M4 7h8M4 12h8M4 17h16v5H4zM12 17v10" fill="none" stroke="#fff" stroke-width="2"/></svg>
              <svg class="ml-[13px] w-[10px] h-[8px]"><use href="#caret"/></svg>
              <h1 class="ml-[99px] text-[49px] leading-[80px] font-bold text-black font-['Liberation_Sans','Noto_Sans_CJK_SC',sans-serif]">8、API 网关</h1>
            </div>
            <p class="mt-[46px] pl-[279px] text-[33px] leading-[48px] font-['Lato','Noto_Sans_CJK_SC',sans-serif]">
              在微服务架构中，<span class="text-[29px]">API Gateway </span>作为整体架构的重要组件，它<b><i>抽象了微服务中都需要的公共</i></b><br>
              <b><i>功能</i></b>，同时提供了客户端<b>负载均衡</b>，<b>服务自动熔断</b>，<b>灰度发布</b>，<b>统一认证</b>，<b>限流流控，日</b><br>
              <b>志统计</b>等丰富的功能，帮助我们解决很多<span class="text-[29px]"> API </span>管理难题。
            </p>
            <span class="absolute left-[224px] top-[343px] w-[56px] h-[26px] border-y-2 border-r border-[#d0d2cf]"></span>
            <span class="absolute right-[223px] top-[343px] w-[56px] h-[26px] border-y-2 border-l border-[#d0d2cf]"></span>
          </section>

          <section class="pt-[64px]">
            <div class="relative ml-[337px] w-[1020px] h-[425px] text-[26px] leading-[31px] text-[#d5f1fb] font-['Liberation_Sans',sans-serif]">
              <div class="absolute left-0 top-[199px] w-[123px] h-[101px] bg-[#5f95d3] border-2 border-[#4a6f9c] flex items-center justify-center">Client</div>
              <div class="absolute left-[248px] top-[199px] w-[150px] h-[127px] bg-[#5f95d3] border-2 border-[#4a6f9c] flex items-center justify-center text-center">API<br>Gateway</div>
              <div class="absolute left-[483px] top-0 w-[196px] h-[94px] bg-[#5f95d3] border-2 border-[#4a6f9c] flex items-center justify-center text-center">Service<br>Discovery</div>
              <div class="absolute left-[832px] top-[55px] w-[182px] h-[77px] bg-[#5f95d3] border-2 border-[#4a6f9c] flex items-center justify-center">book-repo A</div>
              <div class="absolute left-[832px] top-[193px] w-[182px] h-[77px] bg-[#5f95d3] border-2 border-[#4a6f9c] flex items-center justify-center">book-repo B</div>
              <div class="absolute left-[832px] top-[344px] w-[182px] h-[77px] bg-[#5f95d3] border-2 border-[#4a6f9c] flex items-center justify-center">book-repo C</div>
              <svg class="absolute inset-0 size-full" viewBox="0 0 1020 425">
                <g fill="none" stroke="#a3adb3" stroke-width="2">
                  <path d="M336 158 434 70M469 106 380 181M133 249h88M439 301h330"/>
                </g>
                <path d="m441 64-5 13-9-9zM374 187l5-13 8 9zM229 249l-11-6v12zM779 301l-12-6v12z" fill="#6f8793"/>
                <path d="M441 226c28-1 40 36 10 41v6l-11-9 10-10v7c16-4 12-26-9-27z" fill="#456a94"/>
                <path d="M881 421a13 10 0 0 1 26 0z" fill="#eef2f8"/>
              </svg>
              <div class="absolute left-[150px] top-[72px] text-[22px] text-[#555] font-['Open_Sans',sans-serif]">serviceID: book-repo</div>
              <div class="absolute left-[148px] top-[194px] text-[18px] leading-[21px] text-[#555] font-['Open_Sans',sans-serif]">GET<br>/books/1</div>
              <div class="absolute left-[454px] top-[139px] text-[18px] leading-[21px] text-[#555] font-['Open_Sans',sans-serif]">192.168.1.4:8080<br>192.168.1.4:8081<br>192.168.1.4:8082</div>
              <div class="absolute left-[485px] top-[235px] text-[21px] text-[#444] font-['Noto_Sans_CJK_SC',sans-serif]">根据算法选择地址</div>
            </div>
            <h1 class="mt-[116px] pl-[279px] text-[68px] leading-[80px] text-black font-['Noto_Serif_CJK_SC','Noto_Sans_CJK_SC',serif]">三、环境搭建</h1>
          </section>
        </div>
        <div class="w-[43px] bg-linear-to-r from-[#c6c8c5] to-[#e2e4e1]"></div>
        <div class="w-[27px] bg-[#cdcfcc] flex flex-col items-center">
          <svg class="mt-[10px] w-[16px] h-[16px]" viewBox="0 0 16 16"><path d="M3 0h10L8 6z" fill="#858785"/><path d="M1 9h14v5H1zM5 9v5M10 9v5" fill="none" stroke="#858785" stroke-width="1.500"/></svg>
          <svg class="mt-[23px] w-[12px] h-[7px] rotate-180"><use href="#caret"/></svg>
          <div class="mt-[393px] w-[26px] h-[62px] rounded-full bg-[#e6e8e5] border-2 border-[#999b98]"></div>
          <svg class="mt-[413px] w-[12px] h-[7px]"><use href="#caret"/></svg>
          <svg class="mt-[22px] w-[12px] h-[84px]" viewBox="0 0 12 84"><path d="m0 8 6-7 6 7zM0 16l6-7 6 7zM0 68h12l-6 7zM0 76h12l-6 7z" fill="#777"/><rect x="1" y="37" width="10" height="10" fill="none" stroke="#777" stroke-width="2"/></svg>
        </div>
      </div>
      <div class="h-[28px] flex items-center bg-[#cdcfcc]">
        <svg class="ml-[12px] w-[12px] h-[8px] rotate-90"><use href="#caret"/></svg>
        <div class="ml-[54px] flex-1 h-full rounded-full bg-[#e6e8e5] border-2 border-[#999b98]"></div>
        <svg class="ml-[15px] mr-[38px] w-[12px] h-[8px] -rotate-90"><use href="#caret"/></svg>
      </div>
    </div>

    <!-- 右侧工具 -->
    <aside class="w-[55px] shrink-0 flex flex-col items-end fill-none stroke-[#555755] stroke-2">
      <span class="mt-[23px] mr-[4px] w-[31px] h-[6px] border-y-2 border-[#b4b6b3]"></span>
      <div class="mt-[40px] mr-[4px] h-[795px] flex flex-col justify-between">
        <button aria-label="画笔"><svg class="size-[32px]"><use href="#pen"/></svg></button>
        <button aria-label="选择"><svg class="size-[32px]"><use href="#arrow"/></svg></button>
        <button aria-label="应用"><svg class="size-[32px]"><use href="#apps"/></svg></button>
        <button aria-label="设置"><svg class="size-[32px]"><use href="#sliders"/></svg></button>
        <button aria-label="图库"><svg class="size-[32px]"><use href="#images"/></svg></button>
        <button aria-label="分享"><svg class="size-[32px]"><use href="#share"/></svg></button>
        <button aria-label="翻译"><svg class="size-[32px]"><use href="#translate"/></svg></button>
        <button aria-label="归档"><svg class="size-[32px]"><use href="#archive"/></svg></button>
        <button aria-label="图片"><svg class="size-[32px]"><use href="#image"/></svg></button>
        <button aria-label="稻壳"><svg class="size-[32px]"><use href="#hex"/></svg></button>
        <button aria-label="历史"><svg class="size-[32px]"><use href="#history"/></svg></button>
        <button aria-label="帮助"><svg class="size-[32px]"><use href="#help"/></svg></button>
      </div>
      <span class="mt-[30px] w-[48px] h-[2px] bg-[#c4c6c3]"></span>
      <button aria-label="更多" class="mt-[44px] mr-[7px] stroke-[#888a88]"><svg class="w-[26px] h-[6px]" viewBox="0 0 26 6"><circle cx="3" cy="3" r="2"/><circle cx="13" cy="3" r="2"/><circle cx="23" cy="3" r="2"/></svg></button>
    </aside>
  </main>

  <!-- 状态栏 -->
  <footer class="h-[56px] shrink-0 flex items-center bg-[#e6e8e5] border-b-2 border-[#c8cac7] text-[#6a6c6e] fill-none stroke-[#4f514f] stroke-2">
    <span class="ml-[20px]">设置值: 20.6厘米</span>
    <span class="ml-[12px] w-px h-[40px] bg-[#cfd1ce]"></span>
    <span class="ml-[20px]">行: 14</span>
    <span class="ml-[22px]">列: 6</span>
    <span class="ml-[24px] w-px h-[46px] bg-[#cfd1ce]"></span>
    <svg class="ml-[24px] w-[28px] h-[32px] stroke-[#777977]" viewBox="0 0 28 32"><path d="M14 2q5 4 12 4v12q0 8-12 13Q2 26 2 18V6q7 0 12-4z"/><circle cx="14" cy="12" r="3"/><path d="M14 15v9M14 20h3"/></svg>
    <span class="ml-[9px] text-[#5c7c50]">文档已保护</span>
    <div class="ml-auto mr-[13px] flex items-center">
      <button aria-label="全屏"><svg class="size-[29px]"><use href="#full"/></svg></button>
      <button aria-label="阅读" class="ml-[20px]"><svg class="size-[30px]"><use href="#book"/></svg></button>
      <button aria-label="写作" class="ml-[20px]"><svg class="size-[30px]"><use href="#edit"/></svg></button>
      <button aria-label="页面视图" class="ml-[14px] w-[43px] h-[46px] rounded-lg bg-[#b8bab7] flex items-center justify-center"><svg class="size-[30px]"><use href="#doc"/></svg></button>
      <button aria-label="大纲" class="ml-[13px]"><svg class="size-[30px]"><use href="#list"/></svg></button>
      <button aria-label="Web版式" class="ml-[20px]"><svg class="size-[30px]"><use href="#globe"/></svg></button>
      <button aria-label="护眼" class="ml-[18px]"><svg class="size-[31px]"><use href="#eye"/></svg></button>
      <span class="ml-[26px] w-px h-[46px] bg-[#cfd1ce]"></span>
      <button class="ml-[22px] flex items-center gap-[9px] text-[#444]">120%<svg class="w-[10px] h-[8px]"><use href="#caret"/></svg></button>
      <button aria-label="缩小" class="ml-[22px] w-[23px] h-[4px] bg-[#555755]"></button>
      <input type="range" aria-label="缩放" min="0" max="100" value="52" class="ml-[21px] w-[266px] h-[24px] appearance-none bg-transparent [&::-webkit-slider-runnable-track]:h-[2px] [&::-webkit-slider-runnable-track]:bg-[#8f918e] [&::-webkit-slider-thumb]:appearance-none [&::-webkit-slider-thumb]:size-[24px] [&::-webkit-slider-thumb]:-mt-[11px] [&::-webkit-slider-thumb]:rounded-full [&::-webkit-slider-thumb]:border-2 [&::-webkit-slider-thumb]:border-[#666866] [&::-webkit-slider-thumb]:bg-[#eceeeb]">
      <button aria-label="放大" class="ml-[23px]"><svg class="size-[23px] stroke-[4]" viewBox="0 0 24 24"><path d="M12 0v24M0 12h24"/></svg></button>
      <button aria-label="适应" class="ml-[26px]"><svg class="size-[28px]"><use href="#fit"/></svg></button>
    </div>
  </footer>

  <!-- 播放进度 -->
  <div class="h-[32px] shrink-0"></div>
  <div class="h-[4px] shrink-0 flex bg-[#6e6e6e]"><div class="bg-[#4aa8e4]" style="width: 98.7%"></div></div>
  <div class="h-[10px] shrink-0 bg-white"></div>

  <!-- 鼠标 -->
  <div class="absolute left-[275px] top-[878px] size-[95px] rounded-full bg-[#fbee46] mix-blend-multiply"></div>
  <svg class="absolute left-[324px] top-[926px] w-[26px] h-[40px] fill-white stroke-[#333] stroke-2" viewBox="0 0 26 40"><path d="M2 2v31l7-6 5 11 5-2-4-11h9z"/></svg>

  <!-- 字幕 -->
  <p class="absolute left-[579px] top-[640px] text-[50px] leading-[66px] text-[#fd3535] font-['Noto_Sans_CJK_SC',sans-serif]">
    网关：前端发来的所有请求，先到达网关，网关可以对所有请求做统一认证、负载均衡、<br>
    限流流控等操作，通过网关的请求<br>
    再到后端服务处理。
  </p>

  <button aria-label="播放" class="absolute right-[60px] top-[1230px]">
    <svg class="w-[112px] h-[110px] drop-shadow-[0_1px_4px_rgba(0,0,0,0.45)]" viewBox="0 0 112 110"><path d="M30 6q5-6 10 0l12 12h8L72 6q5-6 10 0 4 5-1 9l-4 3h12q22 0 22 22v44q0 22-22 22H23Q1 106 1 84V40q0-22 22-22h12l-4-3q-5-4-1-9zM38 50v28q0 7 8 4l29-15q5-4 0-7L46 45q-8-3-8 5z" fill="#fff" fill-opacity=".93" fill-rule="evenodd"/></svg>
  </button>
</body>
</html>
